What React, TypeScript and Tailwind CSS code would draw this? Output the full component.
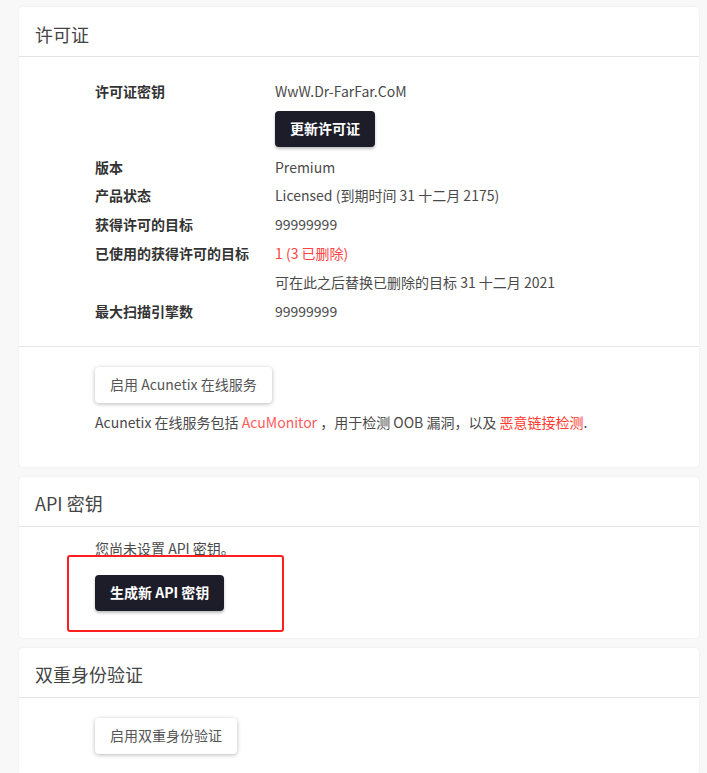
import React from "react";

const font = { fontFamily: '"Noto Sans CJK SC", "Noto Sans", sans-serif' };

function Row({ label, children, red }: { label?: string; children: React.ReactNode; red?: boolean }) {
  return (
    <div className="flex h-[28.8px] items-center">
      <div className="w-[180px] font-bold text-[#333]">{label}</div>
      <div className={red ? "text-[#ff4343]" : "text-[#4a4a4a]"}>{children}</div>
    </div>
  );
}

function DarkButton({ children }: { children: React.ReactNode }) {
  return (
    <button className="h-[36px] rounded-[4px] bg-[#1d1d29] px-[15px] text-[14px] font-bold text-white shadow-[0_2px_3px_rgba(0,0,0,0.25)]">
      {children}
    </button>
  );
}

function LightButton({ children }: { children: React.ReactNode }) {
  return (
    <button className="h-[36px] rounded-[4px] bg-white px-[15px] text-[14px] text-[#555] shadow-[0_1px_4px_rgba(0,0,0,0.28)]">
      {children}
    </button>
  );
}

function CardHeader({ title }: { title: string }) {
  return (
    <div className="flex h-[50px] items-center border-b border-[#e4e4e4] px-4 pt-[5px] text-[18px] text-[#444]">
      {title}
    </div>
  );
}

export default function App() {
  return (
    <div className="min-h-[773px] bg-[#f8f8f8] pt-[7px] pl-[19px] pr-[8px] text-[14px]" style={font}>
      <div className="flex flex-col gap-[10px]">
        <div className="rounded-[4px] bg-white shadow-[0_0_2px_rgba(0,0,0,0.08)]">
          <CardHeader title="许可证" />
          <div className="border-b border-[#e4e4e4] pl-[76px] pt-[20px] pb-[20px]">
            <Row label="许可证密钥">WwW.Dr-FarFar.CoM</Row>
            <div className="ml-[180px] mt-[5px] mb-[6px]">
              <DarkButton>更新许可证</DarkButton>
            </div>
            <Row label="版本">Premium</Row>
            <Row label="产品状态">Licensed (到期时间 31 十二月 2175)</Row>
            <Row label="获得许可的目标">99999999</Row>
            <Row label="已使用的获得许可的目标" red>1 (3 已删除)</Row>
            <Row>可在此之后替换已删除的目标 31 十二月 2021</Row>
            <Row label="最大扫描引擎数">99999999</Row>
          </div>
          <div className="pl-[76px] pt-[20px] pb-[34px]">
            <LightButton>启用 Acunetix 在线服务</LightButton>
            <div className="mt-[8px] leading-[22px] text-[#4a4a4a]">
              Acunetix 在线服务包括 <span className="text-[#ff5b5b]">AcuMonitor</span> ，用于检测 OOB 漏洞，以及{" "}
              <span className="text-[#ff3b2f]">恶意链接检测</span>.
            </div>
          </div>
        </div>

        <div className="relative rounded-[4px] bg-white shadow-[0_0_2px_rgba(0,0,0,0.08)]">
          <CardHeader title="API 密钥" />
          <div className="pl-[76px] pt-[11px] pb-[27px]">
            <div className="leading-[20px] text-[#4a4a4a]">您尚未设置 API 密钥。</div>
            <div className="mt-[17px]">
              <DarkButton>生成新 API 密钥</DarkButton>
            </div>
          </div>
          <div className="absolute left-[48px] top-[78px] h-[77px] w-[217px] rounded-[3px] border-2 border-[#ff1f1f]" />
        </div>

        <div className="rounded-[4px] bg-white shadow-[0_0_2px_rgba(0,0,0,0.08)]">
          <CardHeader title="双重身份验证" />
          <div className="pl-[76px] pt-[20px] pb-[20px]">
            <LightButton>启用双重身份验证</LightButton>
          </div>
        </div>
      </div>
    </div>
  );
}
